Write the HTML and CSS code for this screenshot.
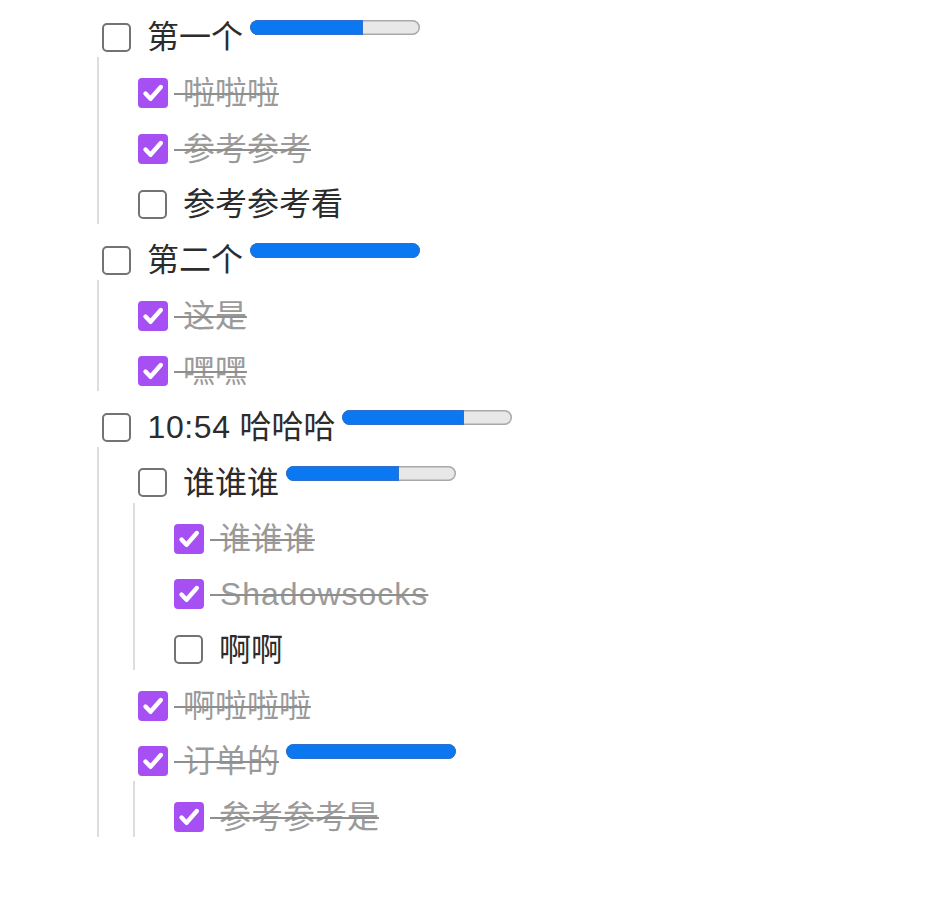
FILE: index.html
```html
<!DOCTYPE html>
<html lang="zh">
<head>
<meta charset="utf-8">
<title>Todo</title>
<link rel="stylesheet" href="styles.css">
</head>
<body>
<main class="page">
  <ul class="tree">
    <li>
      <div class="row"><span class="cb"></span><span class="label">&nbsp;第一个</span><div class="bar"><div class="fill" style="width:66.7%"></div></div></div>
      <ul class="tree sub">
        <li><div class="row done"><span class="cb on"><svg viewBox="0 0 30 30"><path d="M7.5 15.5 L12.5 20.8 L22.8 9"/></svg></span><span class="label">&nbsp;啦啦啦</span></div></li>
        <li><div class="row done"><span class="cb on"><svg viewBox="0 0 30 30"><path d="M7.5 15.5 L12.5 20.8 L22.8 9"/></svg></span><span class="label">&nbsp;参考参考</span></div></li>
        <li><div class="row"><span class="cb"></span><span class="label">&nbsp;参考参考看</span></div></li>
      </ul>
    </li>
    <li>
      <div class="row"><span class="cb"></span><span class="label">&nbsp;第二个</span><div class="bar"><div class="fill full" style="width:100%"></div></div></div>
      <ul class="tree sub">
        <li><div class="row done"><span class="cb on"><svg viewBox="0 0 30 30"><path d="M7.5 15.5 L12.5 20.8 L22.8 9"/></svg></span><span class="label">&nbsp;这是</span></div></li>
        <li><div class="row done"><span class="cb on"><svg viewBox="0 0 30 30"><path d="M7.5 15.5 L12.5 20.8 L22.8 9"/></svg></span><span class="label">&nbsp;嘿嘿</span></div></li>
      </ul>
    </li>
    <li>
      <div class="row"><span class="cb"></span><span class="label"><span class="num">&nbsp;10:54</span> 哈哈哈</span><div class="bar"><div class="fill" style="width:71.4%"></div></div></div>
      <ul class="tree sub">
        <li>
          <div class="row"><span class="cb"></span><span class="label">&nbsp;谁谁谁</span><div class="bar"><div class="fill" style="width:66.7%"></div></div></div>
          <ul class="tree sub">
            <li><div class="row done"><span class="cb on"><svg viewBox="0 0 30 30"><path d="M7.5 15.5 L12.5 20.8 L22.8 9"/></svg></span><span class="label">&nbsp;谁谁谁</span></div></li>
            <li><div class="row done"><span class="cb on"><svg viewBox="0 0 30 30"><path d="M7.5 15.5 L12.5 20.8 L22.8 9"/></svg></span><span class="label latin">&nbsp;Shadowsocks</span></div></li>
            <li><div class="row"><span class="cb"></span><span class="label">&nbsp;啊啊</span></div></li>
          </ul>
        </li>
        <li><div class="row done"><span class="cb on"><svg viewBox="0 0 30 30"><path d="M7.5 15.5 L12.5 20.8 L22.8 9"/></svg></span><span class="label">&nbsp;啊啦啦啦</span></div></li>
        <li>
          <div class="row done"><span class="cb on"><svg viewBox="0 0 30 30"><path d="M7.5 15.5 L12.5 20.8 L22.8 9"/></svg></span><span class="label">&nbsp;订单的</span><div class="bar"><div class="fill full" style="width:100%"></div></div></div>
          <ul class="tree sub">
            <li><div class="row done"><span class="cb on"><svg viewBox="0 0 30 30"><path d="M7.5 15.5 L12.5 20.8 L22.8 9"/></svg></span><span class="label">&nbsp;参考参考是</span></div></li>
          </ul>
        </li>
      </ul>
    </li>
  </ul>
</main>
</body>
</html>
```

FILE: styles.css
```css
html, body {
  margin: 0;
  padding: 0;
  background: #ffffff;
}

.page {
  padding-top: 1.5px;
  font-family: "Liberation Sans", "Noto Sans CJK SC", sans-serif;
  font-size: 32px;
  color: #2c2c2c;
}

.tree {
  list-style: none;
  margin: 0 0 0 97px;
  padding: 0;
}

.tree.sub {
  margin-left: 0;
  padding-left: 34px;
  border-left: 2px solid #dddddd;
}

.row {
  display: flex;
  align-items: center;
  height: 55.7px;
  padding-top: 16px;
  box-sizing: border-box;
}

.cb {
  flex: none;
  width: 29px;
  height: 29px;
  box-sizing: border-box;
  margin-left: 5px;
  margin-right: 7px;
  border: 2px solid #737373;
  border-radius: 5px;
  background: #ffffff;
  display: flex;
  align-items: center;
  justify-content: center;
}

.cb.on {
  border: none;
  width: 30px;
  height: 30px;
  margin-right: 6px;
  border-radius: 4px;
  background: #a650f4;
}

.cb svg {
  width: 30px;
  height: 30px;
  display: block;
}

.cb svg path {
  fill: none;
  stroke: #ffffff;
  stroke-width: 4.4;
  stroke-linecap: round;
  stroke-linejoin: round;
}

.label {
  white-space: pre;
  line-height: 40px;
}

.num {
  letter-spacing: 0.6px;
}

.done .label {
  color: #9a9a9a;
  text-decoration: line-through;
  text-decoration-color: #8e8e8e;
  text-decoration-thickness: 2px;
}

.label.latin {
  letter-spacing: 1px;
}

.bar {
  flex: none;
  align-self: flex-start;
  margin-top: 2.5px;
  margin-left: 7px;
  width: 170px;
  height: 15px;
  box-sizing: border-box;
  border-radius: 8px;
  background: #e8e8e8;
  box-shadow: inset 0 0 0 1.5px #a9a9a9;
  overflow: hidden;
  display: flex;
}

.fill {
  height: 100%;
  background: #0b78f2;
  border-radius: 8px 0 0 8px;
  box-shadow: inset 0 0 0 1px #2f6fcf;
}

.fill.full {
  border-radius: 8px;
}
```
